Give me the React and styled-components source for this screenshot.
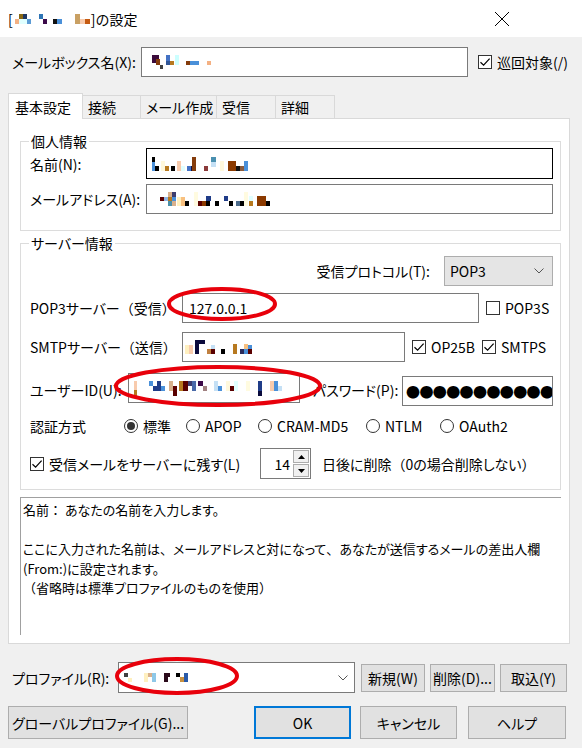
import React from 'react';
import styled, { createGlobalStyle } from 'styled-components';

const GlobalStyle = createGlobalStyle`
  html, body { margin: 0; padding: 0; background: #f0f0f0; }
  * { box-sizing: border-box; }
`;

const Window = styled.div`
  position: relative;
  width: 582px;
  height: 748px;
  background: #f0f0f0;
  display: flex;
  flex-direction: column;
  font-family: "Noto Sans CJK JP", "Noto Sans", sans-serif;
  font-size: 14px;
  font-feature-settings: "palt";
  color: #000;
  overflow: hidden;
`;

const TitleBar = styled.div`
  height: 37px;
  background: #fff;
  display: flex;
  align-items: center;
  justify-content: space-between;
  padding: 0 72px 0 8px;
`;

const TitleText = styled.div`
  display: flex;
  align-items: center;
  font-size: 14px;
  font-feature-settings: normal;
`;

const Body = styled.div`
  padding: 0 12px 0 8px;
  display: flex;
  flex-direction: column;
`;

const Row = styled.div`
  display: flex;
  align-items: center;
  height: ${p => p.$h || 30}px;
  margin-top: ${p => p.$mt || 0}px;
  padding-left: ${p => p.$pl || 0}px;
  justify-content: ${p => (p.$end ? 'flex-end' : 'flex-start')};
  white-space: nowrap;
`;

const Label = styled.span`
  flex-shrink: 0;
  width: ${p => (p.$w ? `${p.$w}px` : 'auto')};
  margin-left: ${p => p.$ml || 0}px;
  white-space: nowrap;
`;

/* full-width punctuation keeps its em box, as in the Windows UI font */
const Wide = styled.span`
  font-feature-settings: normal;
`;

const TextBox = styled.div`
  flex-shrink: 0;
  width: ${p => (p.$w ? `${p.$w}px` : '100%')};
  height: ${p => p.$h || 30}px;
  background: #fff;
  border: 1px solid ${p => (p.$focus ? '#000' : '#7a7a7a')};
  display: flex;
  align-items: center;
  padding-left: ${p => p.$pl || 5}px;
  overflow: hidden;
  align-self: ${p => p.$align || 'center'};
`;

const Dots = styled.span`
  font-size: 14px;
  letter-spacing: -0.6px;
  font-feature-settings: normal;
  white-space: nowrap;
`;

const CheckWrap = styled.span`
  display: inline-flex;
  align-items: center;
  gap: 5px;
  width: ${p => (p.$w ? `${p.$w}px` : 'auto')};
  margin-left: ${p => p.$ml || 0}px;
  flex-shrink: 0;
`;

const CheckBox = styled.span`
  width: 14px;
  height: 14px;
  border: 1px solid #333;
  background: #fff;
  display: inline-flex;
  align-items: center;
  justify-content: center;
`;

const RadioWrap = styled.span`
  display: inline-flex;
  align-items: center;
  gap: 5px;
  width: ${p => (p.$w ? `${p.$w}px` : 'auto')};
  flex-shrink: 0;
`;

const RadioDot = styled.span`
  width: 14px;
  height: 14px;
  border-radius: 50%;
  border: 1px solid #333;
  background: #fff;
  display: inline-flex;
  align-items: center;
  justify-content: center;
  &::after {
    content: '';
    width: 8px;
    height: 8px;
    border-radius: 50%;
    background: ${p => (p.$on ? '#333' : 'transparent')};
  }
`;

const TabStrip = styled.div`
  display: flex;
  align-items: flex-end;
  height: 25px;
  margin-top: 16px;
  position: relative;
  z-index: 1;
`;

const Tab = styled.div`
  width: ${p => p.$w}px;
  height: ${p => (p.$active ? 26 : 23)}px;
  margin-bottom: ${p => (p.$active ? -1 : 0)}px;
  background: ${p => (p.$active ? '#fff' : '#f0f0f0')};
  border: 1px solid #d9d9d9;
  border-bottom: none;
  border-left: ${p => (p.$active ? '1px solid #d9d9d9' : 'none')};
  padding-left: ${p => (p.$active ? 6 : 5)}px;
  display: flex;
  align-items: center;
`;

const Panel = styled.div`
  height: 526px;
  background: #fff;
  border: 1px solid #d9d9d9;
  padding: 22px 8px 0 11px;
  display: flex;
  flex-direction: column;
`;

const GroupBox = styled.div`
  position: relative;
  height: ${p => p.$h}px;
  margin-top: ${p => p.$mt || 0}px;
  border: 1px solid #dcdcdc;
  padding: ${p => p.$pad};
`;

const GroupTitle = styled.span`
  position: absolute;
  top: -11px;
  left: 8px;
  padding: 0 2px;
  background: #fff;
  line-height: 20px;
`;

const FormGrid = styled.div`
  display: grid;
  grid-template-columns: 116px 1fr;
  row-gap: 5px;
  align-items: center;
`;

const Select = styled.div`
  width: 109px;
  height: 30px;
  margin-left: 14px;
  background: #e5e5e5;
  border: 1px solid #adadad;
  display: flex;
  align-items: center;
  justify-content: space-between;
  padding: 0 8px 0 5px;
`;

const Spin = styled.div`
  width: 51px;
  height: 31px;
  background: #fff;
  border: 1px solid #7a7a7a;
  display: flex;
  align-items: stretch;
  flex-shrink: 0;
`;

const SpinValue = styled.span`
  flex: 1;
  display: flex;
  align-items: center;
  justify-content: flex-end;
  padding-right: 3px;
`;

const SpinButtons = styled.div`
  width: 17px;
  display: flex;
  flex-direction: column;
  gap: 1px;
  padding: 1px 1px 1px 0;
`;

const SpinBtn = styled.div`
  flex: 1;
  background: #f0f0f0;
  border: 1px solid #adadad;
  display: flex;
  align-items: center;
  justify-content: center;
`;

const Description = styled.div`
  height: 138px;
  margin-top: 7px;
  border-top: 1px solid #a0a0a0;
  border-left: 1px solid #a0a0a0;
  padding: 2px 2px;
  font-size: 13px;
  line-height: 19.5px;
  white-space: pre-wrap;
`;

const Button = styled.div`
  width: ${p => p.$w}px;
  height: ${p => p.$h || 28}px;
  margin-left: ${p => p.$ml || 0}px;
  background: #e1e1e1;
  border: 1px solid ${p => (p.$default ? '#0078d7' : '#adadad')};
  box-shadow: ${p => (p.$default ? 'inset 0 0 0 1px #0078d7' : 'none')};
  display: flex;
  align-items: center;
  justify-content: center;
  flex-shrink: 0;
  white-space: nowrap;
`;

const Combo = styled.div`
  width: 237px;
  height: 31px;
  background: #fff;
  border: 1px solid #7a7a7a;
  display: flex;
  align-items: center;
  justify-content: space-between;
  padding: 0 6px 0 5px;
  flex-shrink: 0;
`;

const Annotations = styled.svg`
  position: absolute;
  top: 0;
  left: 0;
  pointer-events: none;
`;

const Mosaic = ({ w, h, cells }) => (
  <svg width={w} height={h} viewBox={`0 0 ${w} ${h}`} shapeRendering="crispEdges">
    {cells.map(([x, y, cw, ch, c], i) => (
      <rect key={i} x={x} y={y} width={cw} height={ch} fill={c} />
    ))}
  </svg>
);

const Check = ({ on = true }) => (
  <CheckBox>
    {on && (
      <svg width="12" height="12" viewBox="0 0 12 12">
        <path d="M1.5 6.2 L4.6 9.2 L10.6 2.6" fill="none" stroke="#000" strokeWidth="1.2" />
      </svg>
    )}
  </CheckBox>
);

const Chevron = () => (
  <svg width="10" height="6" viewBox="0 0 10 6">
    <path d="M0.5 0.5 L5 5 L9.5 0.5" fill="none" stroke="#555" strokeWidth="1" />
  </svg>
);

const Triangle = ({ up }) => (
  <svg width="7" height="4" viewBox="0 0 7 4">
    <path d={up ? 'M0 4 L3.5 0 L7 4 Z' : 'M0 0 L3.5 4 L7 0 Z'} fill="#000" />
  </svg>
);

const titleCells = [
  [2, 5, 4, 5, '#f4b183'], [6, 0, 4, 5, '#8b6914'], [10, 0, 4, 5, '#1f3864'], [6, 5, 8, 5, '#e0ffff'], [14, 5, 4, 5, '#5b9bd5'],
  [26, 0, 4, 5, '#2e75b6'], [30, 5, 4, 5, '#3c0a49'], [40, 5, 4, 5, '#111'], [44, 5, 5, 5, '#4a90d9'],
  [62, 0, 5, 10, '#c9a063'], [67, 5, 5, 5, '#f8cbad'], [72, 5, 5, 5, '#c55a11'],
];
const mailboxCells = [
  [0, 0, 7, 8, '#3b0b3b'], [4, 4, 4, 6, '#843c0c'], [8, 10, 3, 4, '#404040'], [14, 0, 4, 6, '#4472c4'], [14, 6, 4, 4, '#2f5597'],
  [18, 6, 4, 4, '#b7791f'], [23, 0, 4, 10, '#ccffff'], [34, 6, 4, 4, '#843c0c'], [38, 6, 9, 4, '#4a90d9'], [55, 6, 4, 4, '#f4b183'],
];
const nameCells = [
  [0, 0, 3, 5, '#000'], [0, 5, 3, 9, '#4a90d9'], [3, 9, 4, 5, '#000'], [9, 4, 4, 10, '#fff8dc'], [13, 9, 4, 5, '#b7791f'],
  [19, 9, 4, 5, '#000'], [25, 4, 4, 10, '#f8cbad'], [29, 9, 4, 5, '#e0ffff'], [35, 9, 4, 5, '#4472c4'], [39, 9, 4, 5, '#101040'],
  [40, 0, 4, 14, '#843c0c'], [52, 9, 4, 5, '#8b3a3a'], [59, 0, 5, 5, '#4a90b0'], [59, 5, 5, 5, '#c5e0f5'], [68, 4, 4, 10, '#fff8dc'],
  [76, 4, 8, 10, '#8b3a00'], [84, 9, 4, 5, '#111'], [88, 9, 4, 5, '#8b5a3a'], [92, 4, 4, 10, '#4a90d9'],
];
const mailCells = [
  [0, 5, 4, 4, '#5a0000'], [4, 5, 4, 4, '#8fb4e3'], [8, 0, 4, 5, '#d8b08c'], [12, 0, 4, 5, '#3c3c6e'], [8, 5, 4, 4, '#b7791f'],
  [12, 5, 4, 4, '#4a90d9'], [8, 9, 4, 5, '#4a8fa8'], [12, 9, 4, 5, '#d8b08c'], [17, 5, 4, 9, '#fff0c0'], [21, 5, 4, 9, '#f8c080'],
  [25, 9, 4, 5, '#000'], [34, 0, 4, 14, '#fffbe0'], [38, 9, 4, 5, '#5a0000'], [42, 9, 4, 5, '#8b3a00'], [46, 9, 4, 5, '#000'],
  [46, 4, 5, 5, '#1f3c88'], [55, 9, 4, 5, '#000'], [64, 4, 4, 5, '#1f3c88'], [69, 9, 4, 5, '#000'], [76, 9, 4, 5, '#4a6a8a'],
  [80, 9, 4, 5, '#000'], [84, 0, 4, 14, '#fffbe0'], [89, 9, 4, 5, '#b7791f'], [89, 4, 4, 5, '#e0ffff'], [97, 4, 9, 10, '#8b3a00'],
  [106, 9, 4, 5, '#000'],
];
const smtpCells = [
  [0, 5, 4, 9, '#fff0c0'], [4, 5, 4, 9, '#f8cbad'], [10, 0, 4, 14, '#0a0a3c'], [14, 0, 6, 4, '#0a0a3c'], [22, 9, 4, 5, '#c08040'],
  [26, 9, 4, 5, '#5a0000'], [26, 5, 4, 4, '#c5e0f5'], [36, 9, 4, 5, '#000'], [48, 4, 4, 10, '#b7791f'], [55, 9, 4, 5, '#2a2a5a'],
  [59, 9, 4, 5, '#4a90d9'], [63, 5, 4, 4, '#4a90d9'], [59, 4, 4, 5, '#f8c080'], [63, 9, 4, 5, '#5a0000'],
];
const userCells = [
  [0, 0, 3, 9, '#f8cbad'], [0, 9, 3, 6, '#b7791f'], [15, 0, 4, 5, '#4a90d9'], [19, 5, 4, 5, '#1f3c88'], [23, 0, 4, 10, '#1f3c88'],
  [27, 5, 4, 5, '#4a90d9'], [35, 0, 4, 10, '#d8b08c'], [39, 5, 4, 10, '#5a0000'], [45, 0, 4, 10, '#b7791f'], [49, 0, 5, 10, '#5a0000'],
  [54, 0, 4, 5, '#3c3c6e'], [58, 0, 4, 10, '#4a6aa8'], [64, 0, 5, 5, '#3c0a49'], [69, 5, 4, 5, '#a08080'], [80, 0, 4, 10, '#c5e0f5'],
  [84, 5, 4, 5, '#4a90d9'], [92, 0, 4, 10, '#fff8dc'], [96, 5, 4, 5, '#5a0000'], [100, 0, 4, 10, '#e0ffff'], [112, 0, 4, 10, '#fffbe0'],
  [124, 0, 4, 10, '#1f3c88'], [124, 10, 4, 5, '#0a0a3c'], [136, 0, 4, 10, '#f8cbad'], [140, 0, 4, 10, '#4a90d9'], [144, 5, 4, 5, '#c5e0f5'],
];
const profileCells = [
  [0, 0, 4, 4, '#404040'], [4, 5, 4, 4, '#fff0c0'], [20, 0, 4, 9, '#fff0c0'], [24, 0, 4, 4, '#d8b08c'], [28, 0, 4, 9, '#8ec8e8'],
  [40, 0, 6, 4, '#2a0a1a'], [40, 4, 4, 5, '#2a0a1a'], [52, 0, 4, 4, '#000'], [56, 4, 4, 5, '#c89040'], [60, 0, 4, 9, '#2a5aa8'],
];

export default function App() {
  return (
    <Window>
      <GlobalStyle />
      <TitleBar>
        <TitleText>
          [<Mosaic w={78} h={10} cells={titleCells} />]の設定
        </TitleText>
        <svg width="16" height="16" viewBox="0 0 16 16">
          <path d="M1 1 L15 15 M15 1 L1 15" stroke="#000" strokeWidth="1" />
        </svg>
      </TitleBar>

      <Body>
        <Row $mt={10} $pl={4}>
          <Label $w={129}>メールボックス名(X):</Label>
          <TextBox $w={327} $pl={10}>
            <Mosaic w={60} h={14} cells={mailboxCells} />
          </TextBox>
          <CheckWrap $ml={10}>
            <Check />
            巡回対象(/)
          </CheckWrap>
        </Row>

        <TabStrip>
          <Tab $w={75} $active>基本設定</Tab>
          <Tab $w={58}>接続</Tab>
          <Tab $w={76}>メール作成</Tab>
          <Tab $w={59}>受信</Tab>
          <Tab $w={59}>詳細</Tab>
        </TabStrip>

        <Panel>
          <GroupBox $h={90} $pad="6px 7px 0 9px">
            <GroupTitle>個人情報</GroupTitle>
            <FormGrid>
              <Label>名前(N):</Label>
              <TextBox $h={31} $focus>
                <Mosaic w={96} h={14} cells={nameCells} />
              </TextBox>
              <Label>メールアドレス(A):</Label>
              <TextBox $h={30} $pl={13}>
                <Mosaic w={110} h={14} cells={mailCells} />
              </TextBox>
            </FormGrid>
          </GroupBox>

          <GroupBox $h={247} $mt={12} $pad="12px 7px 0 9px">
            <GroupTitle>サーバー情報</GroupTitle>
            <Row $end>
              <Label>受信プロトコル(T):</Label>
              <Select>
                POP3
                <Chevron />
              </Select>
            </Row>
            <Row $mt={7}>
              <Label $w={152}>POP3サーバー<Wide>（</Wide>受信<Wide>）</Wide></Label>
              <TextBox $w={297} $pl={6}>127.0.0.1</TextBox>
              <CheckWrap $ml={7}>
                <Check on={false} />
                POP3S
              </CheckWrap>
            </Row>
            <Row $mt={9}>
              <Label $w={152}>SMTPサーバー<Wide>（</Wide>送信<Wide>）</Wide></Label>
              <TextBox $w={223} $pl={2}>
                <Mosaic w={68} h={14} cells={smtpCells} />
              </TextBox>
              <CheckWrap $ml={7}>
                <Check />
                OP25B
              </CheckWrap>
              <CheckWrap $ml={7}>
                <Check />
                SMTPS
              </CheckWrap>
            </Row>
            <Row $mt={11} $h={33}>
              <Label $w={98}>ユーザーID(U):</Label>
              <TextBox $w={172} $align="flex-start" $pl={5}>
                <Mosaic w={148} h={15} cells={userCells} />
              </TextBox>
              <Label $w={89} $ml={13}>パスワード(P):</Label>
              <TextBox $w={151} $align="flex-end" $pl={3}>
                <Dots>●●●●●●●●●●●●</Dots>
              </TextBox>
            </Row>
            <Row $mt={8} $h={24}>
              <Label $w={94}>認証方式</Label>
              <RadioWrap $w={62}>
                <RadioDot $on />
                標準
              </RadioWrap>
              <RadioWrap $w={72}>
                <RadioDot />
                APOP
              </RadioWrap>
              <RadioWrap $w={108}>
                <RadioDot />
                CRAM-MD5
              </RadioWrap>
              <RadioWrap $w={74}>
                <RadioDot />
                NTLM
              </RadioWrap>
              <RadioWrap>
                <RadioDot />
                OAuth2
              </RadioWrap>
            </Row>
            <Row $mt={10} $h={31}>
              <CheckWrap $w={230}>
                <Check />
                受信メールをサーバーに残す(L)
              </CheckWrap>
              <Spin>
                <SpinValue>14</SpinValue>
                <SpinButtons>
                  <SpinBtn>
                    <Triangle up />
                  </SpinBtn>
                  <SpinBtn>
                    <Triangle />
                  </SpinBtn>
                </SpinButtons>
              </Spin>
              <Label $ml={11}>日後に削除<Wide>（</Wide>0の場合削除しない<Wide>）</Wide></Label>
            </Row>
          </GroupBox>

          <Description>
            名前<Wide>：</Wide> あなたの名前を入力します。{'\n\n'}
            ここに入力された名前は<Wide>、</Wide>メールアドレスと対になって<Wide>、</Wide>あなたが送信するメールの差出人欄{'\n'}
            (From:)に設定されます。{'\n'}
            <Wide>（</Wide>省略時は標準プロファイルのものを使用<Wide>）</Wide>
          </Description>
        </Panel>

        <Row $mt={18} $h={31} $pl={4}>
          <Label $w={106}>プロファイル(R):</Label>
          <Combo>
            <Mosaic w={64} h={10} cells={profileCells} />
            <Chevron />
          </Combo>
          <Button $w={64} $ml={6}>新規(W)</Button>
          <Button $w={65} $ml={5}>削除(D)...</Button>
          <Button $w={67} $ml={5}>取込(Y)</Button>
        </Row>

        <Row $mt={13} $h={33}>
          <Button $w={180} $h={33}>グローバルプロファイル(G)...</Button>
          <Button $w={97} $h={33} $ml={66} $default>OK</Button>
          <Button $w={97} $h={33} $ml={9}>キャンセル</Button>
          <Button $w={98} $h={33} $ml={11}>ヘルプ</Button>
        </Row>
      </Body>

      <Annotations width="582" height="748" viewBox="0 0 582 748">
        <ellipse cx="222" cy="304" rx="53" ry="15" fill="none" stroke="#e8000b" strokeWidth="4" />
        <ellipse cx="218" cy="386" rx="102" ry="19" fill="none" stroke="#e8000b" strokeWidth="4" />
        <ellipse cx="177" cy="676" rx="60" ry="17" fill="none" stroke="#e8000b" strokeWidth="4" />
      </Annotations>
    </Window>
  );
}
